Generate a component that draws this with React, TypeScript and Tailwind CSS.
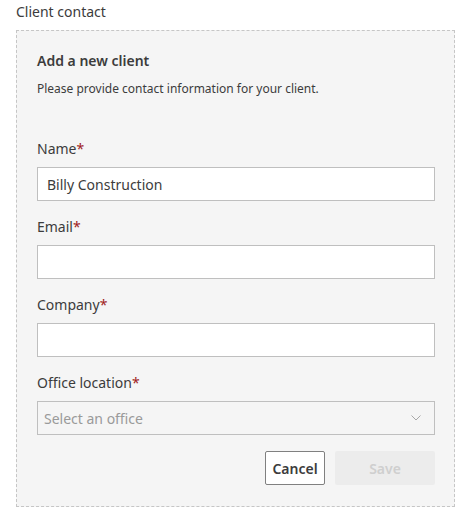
import React, { useState } from "react";

const font = { fontFamily: '"Noto Sans", "Open Sans", Arial, sans-serif' };

function Field({ label, children }: { label: string; children: React.ReactNode }) {
  return (
    <div className="flex flex-col">
      <label className="text-[14px] leading-[20px] text-[#3c3c3c] mb-[8px]">
        {label}
        <span className="text-[#a01c1c]">*</span>
      </label>
      {children}
    </div>
  );
}

export default function App() {
  const [name, setName] = useState("Billy Construction");
  const [email, setEmail] = useState("");
  const [company, setCompany] = useState("");

  const inputCls =
    "h-[34px] w-full bg-white border border-[#bfbfbf] px-[9px] text-[14px] text-[#3c3c3c] outline-none";

  return (
    <div className="min-h-screen bg-white pl-4 pr-[19px] pt-[2px]" style={font}>
      <h2 className="text-[14px] leading-[20px] text-[#3c3c3c] mb-[8px]">Client contact</h2>
      <div className="border border-dashed border-[#c6c6c6] bg-[#f5f5f5] pt-[20px] pb-[21px] pl-[20px] pr-[19px]">
        <h3 className="text-[14px] leading-[20px] font-semibold text-[#3c3c3c]">Add a new client</h3>
        <p className="text-[12px] leading-[18px] text-[#3c3c3c] mt-[9px]">
          Please provide contact information for your client.
        </p>
        <div className="flex flex-col gap-[16px] mt-[41px]">
          <Field label="Name">
            <input className={inputCls} value={name} onChange={(e) => setName(e.target.value)} />
          </Field>
          <Field label="Email">
            <input className={inputCls} value={email} onChange={(e) => setEmail(e.target.value)} />
          </Field>
          <Field label="Company">
            <input className={inputCls} value={company} onChange={(e) => setCompany(e.target.value)} />
          </Field>
          <Field label="Office location">
            <div className="h-[34px] w-full border border-[#bfbfbf] bg-[#f5f5f5] px-[6px] flex items-center justify-between">
              <span className="text-[14px] text-[#9a9a9a]">Select an office</span>
              <svg width="10" height="6" viewBox="0 0 10 6" fill="none" className="mr-[7px]">
                <path d="M0.5 0.5L5 5L9.5 0.5" stroke="#a8a8a8" strokeWidth="1" />
              </svg>
            </div>
          </Field>
        </div>
        <div className="flex justify-end gap-[10px] mt-[16px]">
          <button className="h-[34px] w-[60px] border border-[#808080] rounded-[2px] bg-white text-[14px] font-semibold text-[#3c3c3c]">
            Cancel
          </button>
          <button
            disabled
            className="h-[34px] w-[100px] rounded-[2px] bg-[#ececec] text-[14px] font-semibold text-[#cfcfcf]"
          >
            Save
          </button>
        </div>
      </div>
    </div>
  );
}
